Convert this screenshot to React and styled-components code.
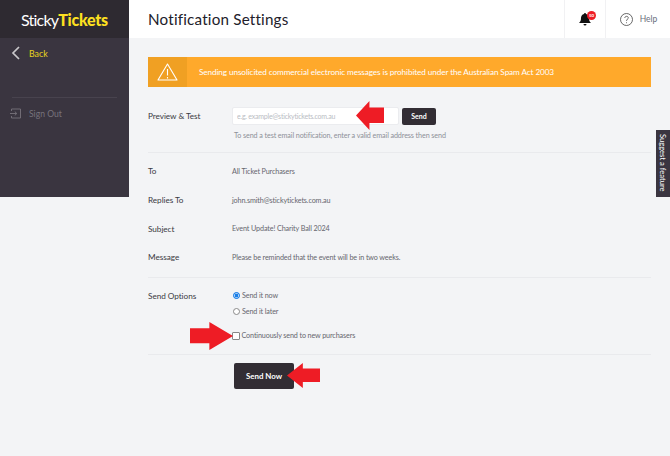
import React from "react";
import styled, { createGlobalStyle } from "styled-components";

const Global = createGlobalStyle`
  html, body { margin: 0; padding: 0; background: #f3f4f6; }
  body { font-family: Lato, "Open Sans", sans-serif; color: #333; }
`;

const Page = styled.div`
  position: relative;
  display: flex;
  align-items: flex-start;
  width: 670px;
  height: 456px;
  overflow: hidden;
  background: #f3f4f6;
`;

const Sidebar = styled.aside`
  width: 129px;
  height: 197px;
  flex-shrink: 0;
  background: #3a3540;
`;

const LogoBar = styled.div`
  height: 38px;
  background: #2e2a31;
  display: flex;
  align-items: center;
  justify-content: center;
  font-size: 16px;
  letter-spacing: -0.8px;
  color: #fff;
  box-sizing: border-box;
`;

const LogoAccent = styled.span`
  color: #fde020;
  font-weight: 900;
  letter-spacing: -0.25px;
`;

const BackLink = styled.div`
  display: flex;
  align-items: center;
  gap: 8px;
  height: 30px;
  padding: 0 0 0 11px;
  color: #e8d41e;
  font-size: 8.8px;
`;

const SideRule = styled.div`
  height: 1px;
  margin: 29px 12px 0;
  background: #48434e;
`;

const SignOut = styled.div`
  display: flex;
  align-items: center;
  gap: 8px;
  padding: 10px 0 0 10px;
  color: #77737c;
  font-size: 8.6px;
`;

const Main = styled.main`
  flex: 1;
  min-width: 0;
`;

const Header = styled.header`
  display: flex;
  align-items: stretch;
  height: 38px;
  background: #fff;
`;

const Title = styled.h1`
  flex: 1;
  margin: 0;
  padding-left: 19px;
  font-size: 15.2px;
  font-weight: 400;
  line-height: 38px;
  letter-spacing: 0.2px;
  color: #22202a;
`;

const HeaderCell = styled.div`
  position: relative;
  display: flex;
  align-items: center;
  justify-content: center;
  gap: 7px;
  width: ${p => p.$width}px;
  box-sizing: border-box;
  padding-left: ${p => p.$pad || 0}px;
  border-left: 1px solid #f1f1f3;
  color: #6b7080;
  font-size: 8.5px;
`;

const Badge = styled.span`
  position: absolute;
  top: 11px;
  left: 22px;
  width: 9px;
  height: 9px;
  border-radius: 50%;
  background: #ee1c25;
  color: #fff;
  font-size: 4.5px;
  font-weight: 700;
  line-height: 9px;
  text-align: center;
`;

const Content = styled.div`
  padding: 19px 19px 0;
`;

const Banner = styled.div`
  display: flex;
  align-items: center;
  height: 30px;
  background: #ffa92b;
  color: #fff;
  font-size: 8.2px;
  letter-spacing: -0.1px;
`;

const BannerIcon = styled.div`
  display: flex;
  align-items: center;
  justify-content: center;
  width: 39px;
  height: 100%;
  margin-right: 12px;
  background: #f0a023;
`;

const Row = styled.div`
  display: flex;
  align-items: center;
  height: ${p => p.$height || 28.7}px;
`;

const Label = styled.div`
  width: 84px;
  flex-shrink: 0;
  color: #3a3a42;
  font-size: 8.2px;
  letter-spacing: -0.04px;
`;

const Value = styled.div`
  color: #66666e;
  font-size: 7.2px;
  letter-spacing: -0.12px;
`;

const Section = styled.section`
  padding: ${p => p.$pad || "0"};
  border-bottom: 1px solid #e9eaed;
`;

const InputRow = styled.div`
  display: flex;
  align-items: center;
`;

const Input = styled.input`
  width: 167px;
  height: 18px;
  box-sizing: border-box;
  padding: 0 4px;
  border: 1px solid #ebecef;
  border-radius: 2px;
  background: #fff;
  font-family: inherit;
  font-size: 7px;
  letter-spacing: -0.22px;
  &::placeholder { color: #b9bcc3; opacity: 1; }
`;

const SmallButton = styled.button`
  width: 34px;
  height: 17px;
  margin-left: 3px;
  padding: 0;
  border: 0;
  border-radius: 2px;
  background: #322d34;
  color: #fff;
  font-family: inherit;
  font-size: 7px;
  font-weight: 700;
`;

const Hint = styled.div`
  margin: 6px 0 0 86px;
  color: #8d9098;
  font-size: 7.2px;
  letter-spacing: -0.1px;
  line-height: 10px;
`;

const OptionRow = styled.div`
  display: flex;
  align-items: flex-start;
`;

const Options = styled.div`
  display: flex;
  flex-direction: column;
`;

const Option = styled.label`
  display: flex;
  align-items: center;
  gap: ${p => p.$gap || 2}px;
  height: 16px;
  margin-top: ${p => p.$top || 0}px;
  padding-left: ${p => p.$indent || 0}px;
  color: #66666e;
  font-size: 7.2px;
  letter-spacing: -0.12px;
`;

const Radio = styled.span`
  width: 5px;
  height: 5px;
  border-radius: 50%;
  box-sizing: content-box;
  border: 0.6px solid ${p => (p.$on ? "#1a7fe8" : "#8a8a8a")};
  background: ${p => (p.$on ? "#1a7fe8" : "#fff")};
  box-shadow: ${p => (p.$on ? "inset 0 0 0 0.6px #fff" : "none")};
`;

const Check = styled.span`
  width: 5.5px;
  height: 5.5px;
  border: 0.6px solid #888;
  border-radius: 1px;
  background: #fff;
`;

const BigButton = styled.button`
  display: block;
  width: 60px;
  height: 26px;
  margin: 8px 0 0 86px;
  padding: 0;
  border: 0;
  border-radius: 2px;
  background: #322d34;
  color: #fff;
  font-family: inherit;
  font-size: 7.9px;
  font-weight: 700;
`;

const SuggestTab = styled.div`
  position: absolute;
  top: 130px;
  right: 0;
  width: 14px;
  height: 67px;
  box-sizing: border-box;
  padding-top: 4px;
  background: #3a3540;
  color: #fff;
  font-size: 7.6px;
  line-height: 14px;
  white-space: nowrap;
  writing-mode: vertical-rl;
`;

const ArrowMark = styled.svg`
  position: absolute;
  left: ${p => p.$x}px;
  top: ${p => p.$y}px;
`;

function Arrow({ x, y, w, h, left }) {
  const points = left
    ? `0,${h / 2} ${w * 0.48},0 ${w * 0.48},${h * 0.22} ${w},${h * 0.22} ${w},${h * 0.76} ${w * 0.48},${h * 0.76} ${w * 0.48},${h}`
    : `${w},${h / 2} ${w * 0.45},0 ${w * 0.45},${h * 0.22} 0,${h * 0.22} 0,${h * 0.76} ${w * 0.45},${h * 0.76} ${w * 0.45},${h}`;
  return (
    <ArrowMark $x={x} $y={y} width={w} height={h} viewBox={`0 0 ${w} ${h}`}>
      <polygon points={points} fill="#ee1c25" />
    </ArrowMark>
  );
}

export default function App() {
  return (
    <Page>
      <Global />
      <Sidebar>
        <LogoBar>Sticky<LogoAccent>Tickets</LogoAccent></LogoBar>
        <BackLink>
          <svg width="10" height="14" viewBox="0 0 10 14" fill="none" stroke="#c9c8cb" strokeWidth="1.7">
            <path d="M8 1 2 7l6 6" />
          </svg>
          Back
        </BackLink>
        <SideRule />
        <SignOut>
          <svg width="11" height="11" viewBox="0 0 11 11" fill="none" stroke="#77737c" strokeWidth="0.9">
            <path d="M1.500 3V1h9v9h-9V8M0 5.500h6.500M4.800 3.600l2 1.900-2 1.900" />
          </svg>
          Sign Out
        </SignOut>
      </Sidebar>
      <Main>
        <Header>
          <Title>Notification Settings</Title>
          <HeaderCell $width={41}>
            <svg width="14" height="14" viewBox="0 0 14 14" fill="#111">
              <path d="M7 1a1 1 0 0 1 1 1c2 .5 3 2.100 3 4 0 2.500.6 3.800 2 5H1c1.400-1.200 2-2.500 2-5 0-1.900 1-3.500 3-4a1 1 0 0 1 1-1ZM5.500 12h3a1.500 1.500 0 0 1-3 0Z" />
            </svg>
            <Badge>50</Badge>
          </HeaderCell>
          <HeaderCell $width={65} $pad={1}>
            <svg width="13" height="13" viewBox="0 0 13 13" fill="none" stroke="#444" strokeWidth="0.8">
              <circle cx="6.500" cy="6.500" r="6" />
              <path d="M4.800 5c0-2.200 3.500-2.200 3.500-.1 0 1.300-1.800 1.300-1.800 3M6.500 9.300v.9" />
            </svg>
            Help
          </HeaderCell>
        </Header>
        <Content>
          <Banner>
            <BannerIcon>
              <svg width="21" height="18" viewBox="0 0 21 18" fill="none" stroke="#fff" strokeWidth="1.100" strokeLinejoin="round">
                <path d="M10.500 1 20 17H1Z" />
                <path d="M10.500 6v6.500M10.500 14v1.500" />
              </svg>
            </BannerIcon>
            Sending unsolicited commercial electronic messages is prohibited under the Australian Spam Act 2003
          </Banner>
          <Section $pad="20px 0 11px">
            <InputRow>
              <Label>Preview &amp; Test</Label>
              <Input placeholder="e.g. example@stickytickets.com.au" readOnly />
              <SmallButton>Send</SmallButton>
            </InputRow>
            <Hint>To send a test email notification, enter a valid email address then send</Hint>
          </Section>
          <Section $pad="4px 0 5px">
            <Row><Label>To</Label><Value>All Ticket Purchasers</Value></Row>
            <Row><Label>Replies To</Label><Value>john.smith@stickytickets.com.au</Value></Row>
            <Row><Label>Subject</Label><Value>Event Update! Charity Ball 2024</Value></Row>
            <Row><Label>Message</Label><Value>Please be reminded that the event will be in two weeks.</Value></Row>
          </Section>
          <Section $pad="10px 0 10px">
            <OptionRow>
              <Label><Row $height={16}>Send Options</Row></Label>
              <Options>
                <Option $indent={1}><Radio $on />Send it now</Option>
                <Option $indent={1}><Radio />Send it later</Option>
                <Option $top={8}><Check />Continuously send to new purchasers</Option>
              </Options>
            </OptionRow>
          </Section>
          <BigButton>Send Now</BigButton>
        </Content>
      </Main>
      <SuggestTab>Suggest a feature</SuggestTab>
      <Arrow x={356} y={101} w={28} h={29} left />
      <Arrow x={190} y={322} w={43} h={28} />
      <Arrow x={287} y={363} w={33} h={25} left />
    </Page>
  );
}
